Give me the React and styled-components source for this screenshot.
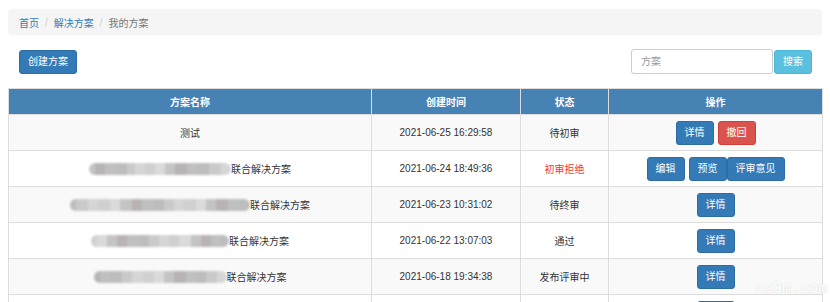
import React from "react";
import styled, { createGlobalStyle } from "styled-components";

const GlobalStyle = createGlobalStyle`
  html, body {
    margin: 0;
    padding: 0;
    background: #fff;
    overflow: hidden;
  }
  body {
    font-family: "Liberation Sans", Arial, "Noto Sans CJK SC", sans-serif;
    font-size: 10px;
    color: #333;
  }
  * {
    box-sizing: border-box;
  }
`;

// the last row is cut by the window edge: only the top of its button shows
const rows = [
  { name: "测试", time: "2021-06-25 16:29:58", status: "待初审", actions: ["detail", "revoke"] },
  {
    name: "联合解决方案",
    blur: [6, 10, 10, 12, 8, 10, 10, 10, 10, 12, 10, 12, 12, 10],
    time: "2021-06-24 18:49:36",
    status: "初审拒绝",
    rejected: true,
    actions: ["edit", "preview", "opinion"],
  },
  {
    name: "联合解决方案",
    blur: [6, 12, 10, 12, 10, 12, 10, 12, 10, 10, 10, 12, 10, 10, 12, 12, 10],
    time: "2021-06-23 10:31:02",
    status: "待终审",
    actions: ["detail"],
  },
  {
    name: "联合解决方案",
    blur: [6, 10, 10, 10, 12, 10, 10, 10, 10, 12, 10, 10, 10, 8],
    time: "2021-06-22 13:07:03",
    status: "通过",
    actions: ["detail"],
  },
  {
    name: "联合解决方案",
    blur: [6, 10, 12, 10, 12, 10, 10, 10, 12, 10, 10, 11, 10],
    time: "2021-06-18 19:34:38",
    status: "发布评审中",
    actions: ["detail"],
  },
  { actions: ["detail"] },
];

const shades = ["#d6d6d6", "#c4c4c4", "#bdbdbd", "#d0d0d0", "#b8b4b4", "#cacaca", "#dadada", "#c0c0c0"];

const actionLabels = {
  detail: { text: "详情", kind: "primary" },
  revoke: { text: "撤回", kind: "danger" },
  edit: { text: "编辑", kind: "primary" },
  preview: { text: "预览", kind: "primary" },
  opinion: { text: "评审意见", kind: "primary" },
};

function App() {
  return (
    <Page>
      <GlobalStyle />
      <Breadcrumb>
        <Crumb href="#">首页</Crumb>
        <Sep>/</Sep>
        <Crumb href="#">解决方案</Crumb>
        <Sep>/</Sep>
        <Current>我的方案</Current>
      </Breadcrumb>

      <Toolbar>
        <Button $kind="primary">创建方案</Button>
        <SearchBox>
          <SearchInput placeholder="方案" />
          <Button $kind="info">搜索</Button>
        </SearchBox>
      </Toolbar>

      <Table>
        <colgroup>
          <col style={{ width: 363 }} />
          <col style={{ width: 149 }} />
          <col style={{ width: 88 }} />
          <col style={{ width: 214 }} />
        </colgroup>
        <thead>
          <tr>
            <Th>方案名称</Th>
            <Th>创建时间</Th>
            <Th>状态</Th>
            <Th>操作</Th>
          </tr>
        </thead>
        <tbody>
          {rows.map((r, i) => (
            <Row key={i} $striped={i % 2 === 0}>
              <Td>
                <NameCell>
                  {r.blur && (
                    <Redacted>
                      {r.blur.map((w, j) => (
                        <Pixel key={j} $shade={shades[(j * 3 + i) % shades.length]} style={{ width: w }} />
                      ))}
                    </Redacted>
                  )}
                  {r.name}
                </NameCell>
              </Td>
              <Td>{r.time}</Td>
              <Td>
                <Status $rejected={r.rejected}>{r.status}</Status>
              </Td>
              <Td>
                <Actions>
                  {r.actions.map((a) => (
                    <Button key={a} $kind={actionLabels[a].kind} $tight={a === "preview"}>
                      {r.name ? actionLabels[a].text : ""}
                    </Button>
                  ))}
                </Actions>
              </Td>
            </Row>
          ))}
        </tbody>
      </Table>

      <Watermark>cs9m.com</Watermark>
    </Page>
  );
}

const Page = styled.div`
  position: relative;
  width: 830px;
  height: 302px;
  padding: 9px 8px 0;
  overflow: hidden;
`;

const Breadcrumb = styled.div`
  height: 26px;
  display: flex;
  align-items: center;
  padding: 0 11px;
  background: #f5f5f5;
  border-radius: 4px;
  font-size: 10px;
`;

const Crumb = styled.a`
  color: #337ab7;
  text-decoration: none;
`;

const Sep = styled.span`
  color: #ccc;
  padding: 0 6px;
`;

const Current = styled.span`
  color: #777;
`;

const Toolbar = styled.div`
  display: flex;
  justify-content: space-between;
  align-items: center;
  margin: 14px 0;
  padding: 0 10px 0 11px;
  height: 25px;
`;

const SearchBox = styled.div`
  display: flex;
  align-items: center;
  gap: 1px;
`;

const SearchInput = styled.input`
  width: 142px;
  height: 25px;
  padding: 0 9px;
  border: 1px solid #ccc;
  border-radius: 3px;
  font-family: inherit;
  font-size: 10px;
  color: #555;
  &::placeholder {
    color: #999;
  }
`;

const kinds = {
  primary: { bg: "#337ab7", border: "#2e6da4" },
  danger: { bg: "#d9534f", border: "#d43f3a" },
  info: { bg: "#5bc0de", border: "#46b8da" },
};

const Button = styled.button`
  height: 24px;
  min-width: 38px;
  padding: 0 8px;
  border: 1px solid ${(p) => kinds[p.$kind].border};
  border-radius: 3px;
  background: ${(p) => kinds[p.$kind].bg};
  color: #fff;
  font-family: inherit;
  font-size: 10px;
  line-height: 22px;
  white-space: nowrap;
  cursor: pointer;
  margin-right: ${(p) => (p.$tight ? "-4px" : "0")};
`;

const Table = styled.table`
  width: 814px;
  border-collapse: collapse;
  table-layout: fixed;
  border: 1px solid #ddd;
`;

const Th = styled.th`
  height: 26px;
  padding: 0;
  background: #4682b4;
  color: #fff;
  font-size: 10px;
  font-weight: bold;
  text-align: center;
  border: 1px solid #ddd;
`;

const Row = styled.tr`
  background: ${(p) => (p.$striped ? "#f9f9f9" : "#fff")};
`;

const Td = styled.td`
  height: 36px;
  padding: 0;
  text-align: center;
  vertical-align: middle;
  border: 1px solid #ddd;
  color: #333;
  font-size: 10px;
`;

const NameCell = styled.div`
  display: flex;
  justify-content: center;
  align-items: center;
`;

const Redacted = styled.span`
  display: flex;
  height: 12px;
  filter: blur(1px);
  border-radius: 6px;
  overflow: hidden;
`;

const Pixel = styled.span`
  display: block;
  height: 12px;
  background: ${(p) => p.$shade};
`;

const Status = styled.span`
  color: ${(p) => (p.$rejected ? "#f33" : "#333")};
`;

const Actions = styled.div`
  display: flex;
  justify-content: center;
  align-items: center;
  gap: 4px;
`;

const Watermark = styled.div`
  position: absolute;
  left: 755px;
  top: 279px;
  font-family: "DejaVu Sans Mono", monospace;
  font-size: 15px;
  font-weight: bold;
  color: rgba(255, 255, 255, 0.92);
  text-shadow: 0 0 1px rgba(180, 180, 180, 0.6);
  white-space: nowrap;
`;

export default App;
